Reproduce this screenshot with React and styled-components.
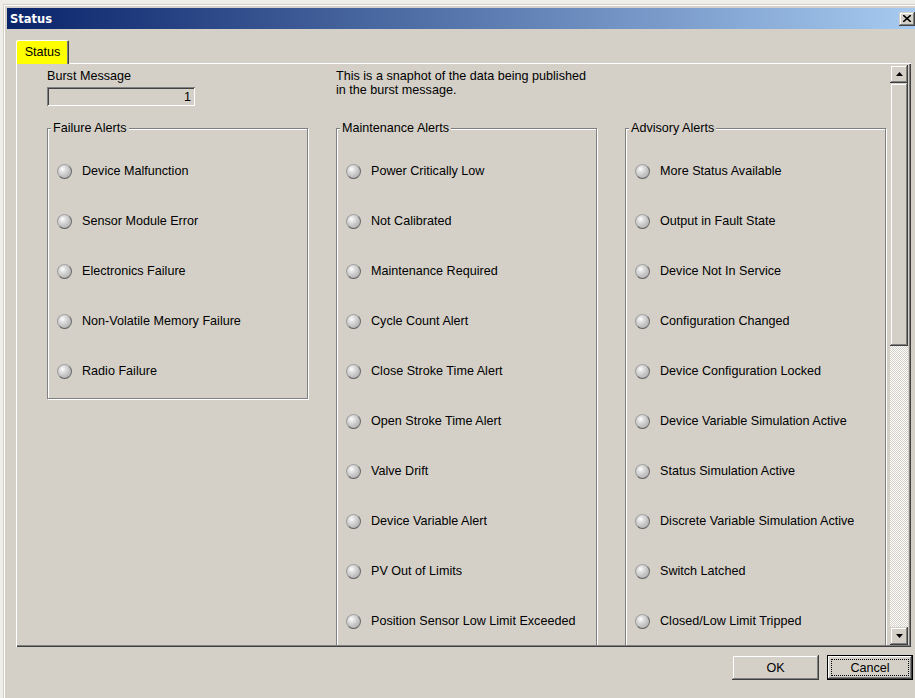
import React from "react";
import styled, { createGlobalStyle } from "styled-components";

const FAILURE = [
  "Device Malfunction",
  "Sensor Module Error",
  "Electronics Failure",
  "Non-Volatile Memory Failure",
  "Radio Failure",
];

const MAINTENANCE = [
  "Power Critically Low",
  "Not Calibrated",
  "Maintenance Required",
  "Cycle Count Alert",
  "Close Stroke Time Alert",
  "Open Stroke Time Alert",
  "Valve Drift",
  "Device Variable Alert",
  "PV Out of Limits",
  "Position Sensor Low Limit Exceeded",
];

const ADVISORY = [
  "More Status Available",
  "Output in Fault State",
  "Device Not In Service",
  "Configuration Changed",
  "Device Configuration Locked",
  "Device Variable Simulation Active",
  "Status Simulation Active",
  "Discrete Variable Simulation Active",
  "Switch Latched",
  "Closed/Low Limit Tripped",
];

const GlobalStyle = createGlobalStyle`
  html, body {
    margin: 0;
    padding: 0;
    overflow: hidden;
    background: #eeede8;
  }
  body {
    font-family: "Liberation Sans", Arial, sans-serif;
    font-size: 12.6px;
    color: #000;
  }
`;

// classic 3d bevels
const raised = `
  box-shadow: inset -1px -1px #404040, inset 1px 1px #d4d0c8,
    inset -2px -2px #808080, inset 2px 2px #fff;
`;

const sunken = `
  box-shadow: inset 1px 1px #808080, inset -1px -1px #fff,
    inset 2px 2px #404040, inset -2px -2px #d4d0c8;
`;

const Window = styled.div`
  margin: 4px 0 0 3px;
  width: 918px;
  height: 700px;
  box-sizing: border-box;
  padding: 4px;
  background: #d4d0c8;
  display: flex;
  flex-direction: column;
  ${raised}
`;

const TitleBar = styled.div`
  height: 21px;
  flex: none;
  display: flex;
  align-items: center;
  justify-content: space-between;
  padding: 0 2px 0 3px;
  background: linear-gradient(to right, #0a246a, #a6caf0);
`;

const Title = styled.span`
  color: #fff;
  font-family: "DejaVu Sans", Verdana, sans-serif;
  font-weight: bold;
  font-size: 11.5px;
`;

const CloseButton = styled.button`
  width: 16px;
  height: 14px;
  padding: 0;
  border: 0;
  background: #d4d0c8;
  display: flex;
  align-items: center;
  justify-content: center;
  ${raised}
`;

const Body = styled.div`
  padding: 11px 0 0 9px;
  display: flex;
  flex-direction: column;
`;

const TabStrip = styled.div`
  display: flex;
  height: 23px;
`;

const Tab = styled.div`
  position: relative;
  z-index: 1;
  width: 53px;
  height: 24px;
  box-sizing: border-box;
  padding-top: 5px;
  text-align: center;
  background: ${(p) => (p.$active ? "#ffff00" : "#d4d0c8")};
  border-radius: 2px 2px 0 0;
  box-shadow: inset 1px 1px #fff, inset -1px 0 #404040, inset -2px 0 #808080;
`;

const Panel = styled.div`
  width: 895px;
  height: 584px;
  box-sizing: border-box;
  padding: 2px;
  display: flex;
  box-shadow: inset 1px 1px #fff, inset -1px -1px #404040,
    inset -2px -2px #808080;
`;

const Content = styled.div`
  flex: 1;
  overflow: hidden;
  padding: 4px 0 0 29px;
`;

const Layout = styled.div`
  display: grid;
  grid-template-columns: repeat(3, 261px);
  column-gap: 28px;
  row-gap: 15px;
  align-items: start;
`;

const Field = styled.div`
  display: flex;
  flex-direction: column;
  gap: 4px;
  line-height: 14px;
`;

const ReadOnly = styled.div`
  width: 148px;
  height: 19px;
  box-sizing: border-box;
  padding: 0 4px;
  display: flex;
  align-items: center;
  justify-content: flex-end;
  ${sunken}
`;

const Note = styled.p`
  grid-column: span 2;
  margin: 0;
  line-height: 14px;
  width: 262px;
`;

const Group = styled.fieldset`
  margin: 0;
  min-width: 0;
  padding: 11px 0 2px 9px;
  border: 1px solid #808080;
  box-shadow: inset 1px 1px #fff, 1px 1px #fff;
`;

const GroupTitle = styled.legend`
  margin-left: -6px;
  padding: 0 2px;
  line-height: 14px;
  background: #d4d0c8;
`;

const AlertList = styled.ul`
  list-style: none;
  margin: 0;
  padding: 0;
`;

const Alert = styled.li`
  height: 50px;
  display: flex;
  align-items: center;
  gap: 10px;
`;

const Led = styled.span`
  flex: none;
  width: 15px;
  height: 15px;
  box-sizing: border-box;
  border-radius: 50%;
  border: 1px solid;
  border-color: #a4a4a4 #6c6c6c #5c5c5c #9c9c9c;
  background: radial-gradient(
    circle at 35% 32%,
    #ffffff 0,
    #e2e2e2 22%,
    #c4c4c4 55%,
    #a8a8a8 100%
  );
`;

const ScrollBar = styled.div`
  width: 18px;
  margin-right: 1px;
  flex: none;
  display: flex;
  flex-direction: column;
  background-color: #fff;
  background-image: conic-gradient(
    #d4d0c8 25%,
    #fff 0 50%,
    #d4d0c8 0 75%,
    #fff 0
  );
  background-size: 2px 2px;
`;

const ScrollButton = styled.div`
  width: 18px;
  height: 18px;
  flex: none;
  display: flex;
  align-items: center;
  justify-content: center;
  background: #d4d0c8;
  ${raised}
`;

const Thumb = styled.div`
  height: 263px;
  flex: none;
  background: #d4d0c8;
  ${raised}
`;

const Track = styled.div`
  flex: 1;
`;

const Footer = styled.div`
  display: flex;
  justify-content: flex-end;
  gap: 8px;
  padding: 8px 4px 0 0;
`;

const DialogButton = styled.button`
  width: ${(p) => (p.$default ? 86 : 87)}px;
  height: 25px;
  border: 0;
  padding: 0;
  background: #d4d0c8;
  font: inherit;
  color: #000;
  ${raised}
  ${(p) =>
    p.$default &&
    `
    box-shadow: inset 0 0 0 1px #000, inset -2px -2px #404040,
      inset 2px 2px #fff, inset -3px -3px #808080;
    outline: 1px dotted #000;
    outline-offset: -5px;
  `}
`;

const Arrow = ({ down }) => (
  <svg width="7" height="4" viewBox="0 0 7 4">
    <polygon
      points={down ? "0,0 7,0 3.5,4" : "0,4 7,4 3.5,0"}
      fill="#000"
    />
  </svg>
);

const AlertGroup = ({ title, items }) => (
  <Group>
    <GroupTitle>{title}</GroupTitle>
    <AlertList>
      {items.map((name) => (
        <Alert key={name}>
          <Led />
          {name}
        </Alert>
      ))}
    </AlertList>
  </Group>
);

const App = () => (
  <>
    <GlobalStyle />
    <Window>
      <TitleBar>
        <Title>Status</Title>
        <CloseButton aria-label="Close">
          <svg width="8" height="7" viewBox="0 0 8 7">
            <path d="M0 0 L8 7 M8 0 L0 7" stroke="#000" strokeWidth="1.6" />
          </svg>
        </CloseButton>
      </TitleBar>
      <Body>
        <TabStrip>
          <Tab $active>Status</Tab>
        </TabStrip>
        <Panel>
          <Content>
            <Layout>
              <Field>
                Burst Message
                <ReadOnly>1</ReadOnly>
              </Field>
              <Note>
                This is a snaphot of the data being published in the burst
                message.
              </Note>
              <AlertGroup title="Failure Alerts" items={FAILURE} />
              <AlertGroup title="Maintenance Alerts" items={MAINTENANCE} />
              <AlertGroup title="Advisory Alerts" items={ADVISORY} />
            </Layout>
          </Content>
          <ScrollBar>
            <ScrollButton>
              <Arrow />
            </ScrollButton>
            <Thumb />
            <Track />
            <ScrollButton>
              <Arrow down />
            </ScrollButton>
          </ScrollBar>
        </Panel>
        <Footer>
          <DialogButton>OK</DialogButton>
          <DialogButton $default>Cancel</DialogButton>
        </Footer>
      </Body>
    </Window>
  </>
);

export default App;
